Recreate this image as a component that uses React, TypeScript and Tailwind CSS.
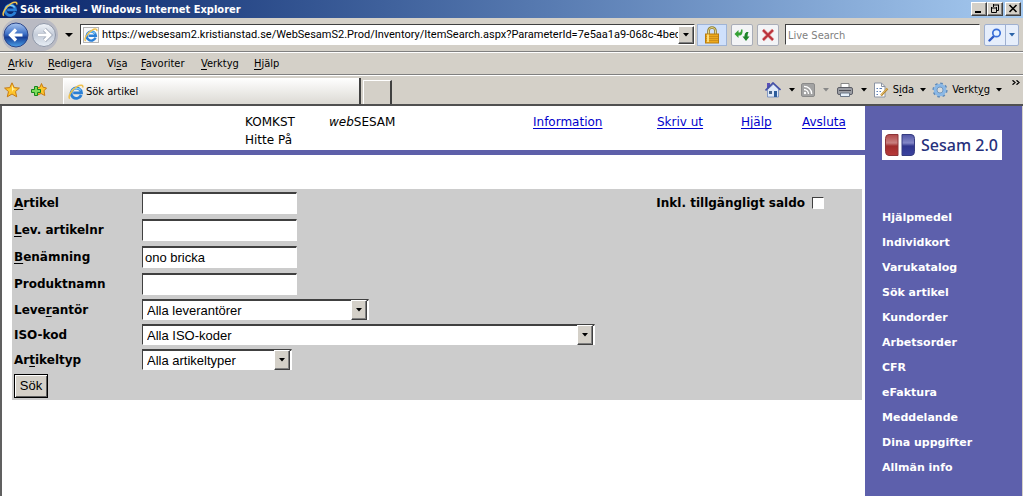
import React, { useId, useState } from "react";

const uiFont = "font-['DejaVu_Sans_Condensed','DejaVu_Sans',sans-serif]";
const addressFont = "font-[Roboto,sans-serif]";
const pageFont = "font-['DejaVu_Sans',sans-serif]";
const fieldFont = "font-['Liberation_Sans',sans-serif]";

const sunken =
  "border border-t-[#404040] border-l-[#404040] border-r-white border-b-white bg-white";
const raised =
  "border border-t-white border-l-white border-r-[#404040] border-b-[#404040] bg-[#d4d0c8] shadow-[inset_-1px_-1px_0_#808080]";

function ExplorerIcon({ className }: { className: string }) {
  return (
    <svg viewBox="0 0 16 16" className={className} aria-hidden="true">
      <path
        d="M13.200 11A5.200 5.200 0 1 1 13.500 8.800H5.200"
        fill="none"
        stroke="#2a7fd6"
        strokeWidth="2.800"
      />
      <path d="M3.600 7.400C4.600 4.200 10.500 3 12.700 6.400" fill="none" stroke="#7fd0fa" strokeWidth="1.200" />
      <path
        d="M1.800 14.800C-0.500 12.500 4 5.500 9 2.600C12.500 0.500 15.500 0.800 14.600 3.600"
        fill="none"
        stroke="#eec04c"
        strokeWidth="1.600"
      />
    </svg>
  );
}

function Caret({ className = "text-black" }: { className?: string }) {
  return (
    <svg viewBox="0 0 6 4" className={`h-1 w-1.5 shrink-0 ${className}`} aria-hidden="true">
      <path d="M0 0H6L3 3.500Z" fill="currentColor" />
    </svg>
  );
}

function NavArrows() {
  return (
    <div className="flex h-8 w-14 shrink-0 items-center rounded-2xl bg-[#b9bac3]">
      <button type="button" aria-label="Bakåt" className="size-7">
        <svg viewBox="0 0 28 28" className="size-7">
          <defs>
            <linearGradient id="back" x1="0" y1="0" x2="0" y2="1">
              <stop offset="0" stopColor="#a9c5ef" />
              <stop offset="0.450" stopColor="#3f72c8" />
              <stop offset="0.600" stopColor="#173e96" />
              <stop offset="1" stopColor="#4ba1ea" />
            </linearGradient>
          </defs>
          <circle cx="14" cy="14" r="12" fill="url(#back)" stroke="#2c468a" />
          <path d="M20.500 14H9M14 8.500L8.500 14L14 19.500" fill="none" stroke="#fff" strokeWidth="3.200" />
        </svg>
      </button>
      <button type="button" aria-label="Framåt" className="size-7">
        <svg viewBox="0 0 28 28" className="size-7">
          <defs>
            <linearGradient id="forward" x1="0" y1="0" x2="0" y2="1">
              <stop offset="0" stopColor="#f2f5fa" />
              <stop offset="0.500" stopColor="#c4ccd9" />
              <stop offset="1" stopColor="#e8eef6" />
            </linearGradient>
          </defs>
          <circle cx="14" cy="14" r="11.500" fill="url(#forward)" stroke="#8f97a8" />
          <path d="M8 14H19M14.500 8.500L20 14L14.500 19.500" fill="none" stroke="#8f98aa" strokeWidth="4" />
          <path d="M8 14H19M14.500 8.500L20 14L14.500 19.500" fill="none" stroke="#fff" strokeWidth="2.800" />
        </svg>
      </button>
    </div>
  );
}

function LockIcon() {
  return (
    <svg viewBox="0 0 16 18" className="h-[18px] w-4" aria-hidden="true">
      <path d="M4.500 9V5a3.500 3.500 0 0 1 7 0V9" fill="none" stroke="#8a7a30" strokeWidth="2.600" />
      <path d="M4.500 9V5a3.500 3.500 0 0 1 7 0V9" fill="none" stroke="#e8d98a" strokeWidth="1" />
      <rect x="1.500" y="8" width="13" height="9" fill="#eda91c" stroke="#b87c10" />
      <path d="M2 10.500H14M2 12.500H14M2 14.500H14" stroke="#cf8f18" />
      <path d="M4 8.500V16" stroke="#fbdc7c" strokeWidth="2" />
    </svg>
  );
}

function RefreshIcon() {
  return (
    <svg viewBox="0 0 16 16" className="size-4" aria-hidden="true">
      <path d="M.5 7L4.500 3V5.500H5.500Q7 5.500 7 2.500H8.500Q9 8.500 5.500 8.500H4.500V11Z" fill="#35a235" />
      <path d="M15.500 9.500L12 14L8.500 9.500H10.500V8.500Q10.500 6 12.500 5H14.500Q13.500 6.500 13.500 9.500Z" fill="#1d8428" />
    </svg>
  );
}

function StopIcon() {
  return (
    <svg viewBox="0 0 14 14" className="size-3.5" aria-hidden="true">
      <path d="M2 2L12 12M12 2L2 12" stroke="#e4a2a2" strokeWidth="3.400" />
      <path d="M2 2L12 12M12 2L2 12" stroke="#b92f38" strokeWidth="1.800" />
    </svg>
  );
}

function SearchIcon() {
  return (
    <svg viewBox="0 0 14 14" className="size-3.5" aria-hidden="true">
      <path d="M1.500 12.500L5.500 8.500" stroke="#2c58c4" strokeWidth="2.400" strokeLinecap="round" />
      <circle cx="8.500" cy="5" r="3.700" fill="#e6f2ff" stroke="#3b6fd8" strokeWidth="1.700" />
    </svg>
  );
}

function StarIcon() {
  return (
    <svg viewBox="0 0 16 16" className="size-4" aria-hidden="true">
      <path
        d="M8 .8L10.200 5.600L15.400 6.100L11.500 9.600L12.700 14.800L8 12L3.300 14.800L4.500 9.600L.6 6.100L5.800 5.600Z"
        fill="#fdc52c"
        stroke="#c77a12"
      />
      <path d="M8 3L9.400 6.600L12 7L9 8L8 10Z" fill="#fff0a8" />
    </svg>
  );
}

function AddStarIcon() {
  return (
    <svg viewBox="0 0 16 16" className="size-4" aria-hidden="true">
      <path
        d="M10.500 1.500L12 5.200L15.500 6L13 8.800L13.800 13.500L10 11.500L6.500 13L7.500 8.500L5 6L9 5.200Z"
        fill="#fdc52c"
        stroke="#c77a12"
      />
      <path
        d="M3.500 4.500H6.500V7.500H9.500V10.500H6.500V13.500H3.500V10.500H.5V7.500H3.500Z"
        fill="#7bdc5a"
        stroke="#16861c"
      />
    </svg>
  );
}

function HomeIcon() {
  return (
    <svg viewBox="0 0 16 16" className="size-4" aria-hidden="true">
      <path d="M2 1H5V5L2 7Z" fill="#5a50b8" />
      <path d="M2.500 7.500L8.500 2L13.500 7V15H2.500Z" fill="#dfe9f8" stroke="#6b86bd" strokeWidth=".8" />
      <path d="M.5 8.500L8 1L15.500 8" fill="none" stroke="#4450a8" strokeWidth="1.700" />
      <rect x="4" y="9" width="3" height="3" fill="#45648f" />
      <rect x="9" y="9" width="3" height="6" fill="#2c5c9c" />
    </svg>
  );
}

function FeedIcon() {
  return (
    <svg viewBox="0 0 14 14" className="size-3.5" aria-hidden="true">
      <rect x=".5" y=".5" width="13" height="13" rx="1.500" fill="#a3a3a3" stroke="#8a8a8a" />
      <circle cx="4" cy="10" r="1.200" fill="#fff" />
      <path d="M3 6.500A4.500 4.500 0 0 1 7.500 11M3 3.300A7.700 7.700 0 0 1 10.700 11" fill="none" stroke="#fff" strokeWidth="1.300" />
    </svg>
  );
}

function PrinterIcon() {
  return (
    <svg viewBox="0 0 16 16" className="size-4" aria-hidden="true">
      <path d="M4 6V1.500H12V6" fill="#fff" stroke="#888" />
      <rect x=".5" y="5.500" width="15" height="7" rx="1.500" fill="#9c9ea4" stroke="#5c5e66" />
      <path d="M2 8.500H14" stroke="#4c4e56" />
      <path d="M3.500 11H12.500V14.500H3.500Z" fill="#e6f1fb" stroke="#6c7888" />
    </svg>
  );
}

function PageIcon() {
  return (
    <svg viewBox="0 0 16 16" className="size-4" aria-hidden="true">
      <path d="M1.500 1H8.500L12 4.500V15H1.500Z" fill="#fff" stroke="#8a93a3" />
      <path d="M8.500 1V4.500H12" fill="none" stroke="#8a93a3" />
      <path d="M3.500 6.500H5M6.500 6.500H9M3.500 9.500H5M6.500 9.500H8M3.500 12.500H5" stroke="#5b7fb8" />
      <path d="M8 13.500L14.500 6.500" stroke="#b8862c" strokeWidth="2.200" />
      <path d="M8 13L14 6.500" stroke="#f3d78a" strokeWidth=".8" />
    </svg>
  );
}

function GearIcon() {
  return (
    <svg viewBox="0 0 16 16" className="size-4" aria-hidden="true">
      <circle cx="8" cy="8" r="6.600" fill="none" stroke="#5f89b8" strokeWidth="2" strokeDasharray="2.600 2.580" />
      <circle cx="8" cy="8" r="4.700" fill="#d4d0c8" stroke="#8ab8e6" strokeWidth="3.200" />
      <circle cx="8" cy="8" r="3" fill="#d8dbdc" stroke="#5f89b8" strokeWidth=".8" />
    </svg>
  );
}

function WindowButton({ label, children }: { label: string; children: React.ReactNode }) {
  return (
    <button type="button" aria-label={label} className={`h-3.5 w-4 ${raised}`}>
      <svg viewBox="0 0 14 12" className="h-3 w-3.5" fill="none" stroke="#000">
        {children}
      </svg>
    </button>
  );
}

function TitleBar() {
  return (
    <header className="flex h-[18px] items-center bg-linear-to-r from-[#0a246a] to-[#a6caf0] pr-0.5 pl-0.5">
      <ExplorerIcon className="size-4" />
      <h1 className={`ml-0.5 flex-1 pt-0.5 text-[11px] leading-4 font-bold text-white ${uiFont}`}>
        Sök artikel - Windows Internet Explorer
      </h1>
      <WindowButton label="Minimera">
        <path d="M3 9H9" strokeWidth="2" />
      </WindowButton>
      <WindowButton label="Återställ">
        <path d="M5 2H11M5.500 1V4M10.500 2V7.500H9M3 5H9M3.500 4V9.500H8.500V4" />
      </WindowButton>
      <span className="w-0.5" />
      <WindowButton label="Stäng">
        <path d="M3.500 2L10.500 9M10.500 2L3.500 9" strokeWidth="1.600" />
      </WindowButton>
    </header>
  );
}

function AddressBar() {
  return (
    <div className="flex h-[34px] items-center border-b border-[#808080] pr-1 pl-0.5">
      <NavArrows />
      <button type="button" aria-label="Senaste sidor" className="flex w-[22px] justify-center">
        <svg viewBox="0 0 8 4" className="h-1 w-2">
          <path d="M0 0H8L4 4Z" />
        </svg>
      </button>
      <div className={`flex h-[21px] min-w-0 flex-1 items-center pl-0.5 ${sunken}`}>
        <span className="flex size-4 shrink-0 items-center justify-center border border-[#b5b5b5] bg-[#f8f8f8]">
          <ExplorerIcon className="size-3.5" />
        </span>
        <input
          aria-label="Adress"
          defaultValue="https://websesam2.kristianstad.se/WebSesamS2.Prod/Inventory/ItemSearch.aspx?ParameterId=7e5aa1a9-068c-4bec"
          className={`ml-[3px] h-[18px] min-w-0 flex-1 text-[11px] outline-none ${addressFont}`}
        />
        <button
          type="button"
          aria-label="Visa adresser"
          className={`flex h-[18px] w-4 shrink-0 items-center justify-center ${raised}`}
        >
          <Caret />
        </button>
      </div>
      <button
        type="button"
        aria-label="Säkerhetsrapport"
        className="ml-0.5 flex h-[22px] w-[30px] items-center justify-center border border-[#9fb4d6] bg-[#cfe0fb]"
      >
        <LockIcon />
      </button>
      <button
        type="button"
        aria-label="Uppdatera"
        className="ml-1 flex size-[22px] items-center justify-center rounded-xs border border-[#a9adb8] bg-[#f3f4f6]"
      >
        <RefreshIcon />
      </button>
      <button
        type="button"
        aria-label="Stoppa"
        className="ml-1 flex size-[22px] items-center justify-center rounded-xs border border-[#a9adb8] bg-[#f3f4f6]"
      >
        <StopIcon />
      </button>
      <input
        aria-label="Live Search"
        placeholder="Live Search"
        className={`ml-1.5 h-[21px] w-[195px] px-0.5 pt-0.5 text-[11px] outline-none placeholder:text-[#808080] ${uiFont} ${sunken}`}
      />
      <div className="ml-1 flex h-[22px] w-[35px] rounded-xs border border-[#9fb0d0] bg-[#e6eefb]">
        <button type="button" aria-label="Sök" className="flex w-5 items-center justify-center">
          <SearchIcon />
        </button>
        <button
          type="button"
          aria-label="Sökalternativ"
          className="flex flex-1 items-center justify-center border-l border-[#9fb0d0]"
        >
          <Caret className="text-[#2b63a8]" />
        </button>
      </div>
    </div>
  );
}

function KeyLabel({ before = "", letter, after }: { before?: string; letter: string; after: string }) {
  return (
    <span>
      {before}
      <span className="underline underline-offset-2">{letter}</span>
      {after}
    </span>
  );
}

function MenuBar() {
  const item = "shrink-0 text-left";
  return (
    <nav
      className={`flex h-[23px] items-center border-t border-b border-t-white border-b-[#808080] pt-0.5 pl-2 text-[11px] ${uiFont}`}
    >
      <button type="button" className={`${item} w-10`}><KeyLabel letter="A" after="rkiv" /></button>
      <button type="button" className={`${item} w-[59px]`}><KeyLabel letter="R" after="edigera" /></button>
      <button type="button" className={`${item} w-[34px]`}><KeyLabel before="Vi" letter="s" after="a" /></button>
      <button type="button" className={`${item} w-[60px]`}><KeyLabel letter="F" after="avoriter" /></button>
      <button type="button" className={`${item} w-[53px]`}><KeyLabel letter="V" after="erktyg" /></button>
      <button type="button" className={item}><KeyLabel letter="H" after="jälp" /></button>
    </nav>
  );
}

function TabBar() {
  return (
    <div
      className={`flex h-[31px] border-t border-b-2 border-t-white border-b-[#505050] pl-1 text-[11px] ${uiFont}`}
    >
      <div className="flex items-center gap-[11px]">
        <button type="button" aria-label="Favoriter"><StarIcon /></button>
        <button type="button" aria-label="Lägg till favorit"><AddStarIcon /></button>
      </div>
      <button
        type="button"
        className="mt-0.5 ml-4 flex w-[298px] items-center gap-0.5 border-r-2 border-l border-r-[#404040] border-l-white bg-linear-to-b from-white to-[#dcdad4] pt-0.5 pl-1"
      >
        <ExplorerIcon className="size-4" />
        Sök artikel
      </button>
      <button
        type="button"
        aria-label="Ny flik"
        className="mt-1 ml-0.5 w-[29px] border border-r-2 border-b-0 border-white border-r-[#404040]"
      />
      <div className="ml-auto flex items-center pr-[3px]">
        <button type="button" aria-label="Startsida" className="flex items-center gap-2"><HomeIcon /><Caret /></button>
        <button type="button" aria-label="Feeds" className="ml-1.5 flex items-center gap-2"><FeedIcon /><Caret className="text-[#888]" /></button>
        <button type="button" aria-label="Skriv ut" className="ml-2 flex items-center gap-2"><PrinterIcon /><Caret /></button>
        <button type="button" className="ml-1.5 flex items-center gap-1">
          <PageIcon />
          <KeyLabel before="S" letter="i" after="da" />
          <span className="ml-0.5 flex"><Caret /></span>
        </button>
        <button type="button" className="ml-1.5 flex items-center gap-1">
          <GearIcon />
          <KeyLabel before="Verkt" letter="y" after="g" />
          <span className="ml-0.5 flex"><Caret /></span>
        </button>
        <button type="button" aria-label="Fler verktyg" className="ml-2.5 self-start pt-1">
          <svg viewBox="0 0 8 5" className="h-[5px] w-2" fill="none" stroke="#000" strokeWidth="1.300">
            <path d="M.5 .3L3 2.500L.5 4.700M4.500 .3L7 2.500L4.500 4.700" />
          </svg>
        </button>
      </div>
    </div>
  );
}

function TextRow({ label, value = "" }: { label: React.ReactNode; value?: string }) {
  const id = useId();
  return (
    <div className="flex h-[27px] items-center">
      <label htmlFor={id} className="w-32 text-xs font-bold">{label}</label>
      <input
        id={id}
        defaultValue={value}
        className={`h-[22px] w-[155px] border-t-2 pl-0.5 text-[13px] outline-none ${fieldFont} ${sunken}`}
      />
    </div>
  );
}

function SelectRow({ label, option, width }: { label: React.ReactNode; option: string; width: string }) {
  const id = useId();
  return (
    <div className="flex h-[25px] items-center">
      <label htmlFor={id} className="w-32 shrink-0 text-xs font-bold">{label}</label>
      <div className={`relative ${width}`}>
        <select
          id={id}
          className={`h-[21px] w-full appearance-none border-t-2 pl-1 text-[13px] outline-none ${fieldFont} ${sunken}`}
        >
          <option>{option}</option>
        </select>
        <span
          className={`pointer-events-none absolute top-0.5 right-0.5 bottom-0.5 flex w-4 items-center justify-center ${raised}`}
        >
          <Caret />
        </span>
      </div>
    </div>
  );
}

function SearchForm() {
  const [withStock, setWithStock] = useState(false);
  return (
    <form
      onSubmit={(event) => event.preventDefault()}
      className="mt-[34px] mr-[3px] ml-0.5 flex items-start bg-[#cccccc] pl-0.5"
    >
      <div className="min-w-0 flex-1">
        <TextRow label={<KeyLabel letter="A" after="rtikel" />} />
        <TextRow label={<KeyLabel letter="L" after="ev. artikelnr" />} />
        <TextRow label={<KeyLabel letter="B" after="enämning" />} value="ono bricka" />
        <TextRow label="Produktnamn" />
        <SelectRow label={<KeyLabel before="Leve" letter="r" after="antör" />} option="Alla leverantörer" width="w-[227px]" />
        <SelectRow label="ISO-kod" option="Alla ISO-koder" width="w-[453px]" />
        <SelectRow label={<KeyLabel before="Ar" letter="t" after="ikeltyp" />} option="Alla artikeltyper" width="w-[150px]" />
        <div className="flex h-7 items-center">
          <button
            type="submit"
            className={`h-6 w-[34px] border border-black bg-[#d4d0c8] text-[13px] shadow-[inset_1px_1px_0_#fff,inset_-1px_-1px_0_#606060] ${fieldFont}`}
          >
            Sök
          </button>
        </div>
      </div>
      <label className="flex h-7 shrink-0 items-center gap-[7px] pr-[38px] text-xs font-bold">
        Inkl. tillgängligt saldo
        <input
          type="checkbox"
          checked={withStock}
          onChange={(event) => setWithStock(event.target.checked)}
          className={`size-3 appearance-none checked:bg-black ${sunken}`}
        />
      </label>
    </form>
  );
}

function PageHeader() {
  const link = "text-[#0000cc] underline underline-offset-2";
  return (
    <div className="flex h-[49px] border-b-[5px] border-[#5d5fa9] pt-[7px] text-xs leading-[18px]">
      <div className="ml-[235px] w-[84px]">
        <div>KOMKST</div>
        <div>Hitte På</div>
      </div>
      <div><em>web</em>SESAM</div>
      <nav className="mr-[17px] ml-auto flex">
        <div className="w-[124px]"><a href="#information" className={link}>Information</a></div>
        <div className="w-[84px]"><a href="#skriv-ut" className={link}>Skriv ut</a></div>
        <div className="w-[61px]"><a href="#hjalp" className={link}>Hjälp</a></div>
        <div className="w-[46px]"><a href="#avsluta" className={link}>Avsluta</a></div>
      </nav>
    </div>
  );
}

const sideLinks = [
  "Hjälpmedel",
  "Individkort",
  "Varukatalog",
  "Sök artikel",
  "Kundorder",
  "Arbetsorder",
  "CFR",
  "eFaktura",
  "Meddelande",
  "Dina uppgifter",
  "Allmän info",
];

function Sidebar() {
  return (
    <aside className="w-[157px] shrink-0 bg-[#5d60ac] pt-6 pl-[17px]">
      <div className="flex h-[30px] w-[120px] items-center gap-1.5 bg-white pl-[3px]">
        <svg viewBox="0 0 30 22" className="h-[22px] w-[30px] shrink-0" aria-hidden="true">
          <defs>
            <linearGradient id="red" x1="0" y1="0" x2="0" y2="1">
              <stop offset="0" stopColor="#b04848" />
              <stop offset="0.400" stopColor="#c98080" />
              <stop offset="0.550" stopColor="#a02c2c" />
              <stop offset="1" stopColor="#b83a3a" />
            </linearGradient>
            <linearGradient id="blue" x1="0" y1="0" x2="0" y2="1">
              <stop offset="0" stopColor="#5054a4" />
              <stop offset="0.400" stopColor="#8488c8" />
              <stop offset="0.550" stopColor="#30368e" />
              <stop offset="1" stopColor="#3c44a0" />
            </linearGradient>
          </defs>
          <path d="M13 .5V21.500H4Q.5 21.500 .5 17.500V4.500Q.5 .5 4 .5Z" fill="url(#red)" stroke="#8c3438" />
          <path d="M17 .5V21.500H26Q29.500 21.500 29.500 17.500V4.500Q29.500 .5 26 .5Z" fill="url(#blue)" stroke="#363c80" />
        </svg>
        <span className="font-['Noto_Sans',sans-serif] text-base font-medium whitespace-nowrap text-[#26307c]">Sesam 2.0</span>
      </div>
      <nav className="mt-[45px] flex flex-col items-start text-[11px] leading-[25px] font-bold text-white">
        {sideLinks.map((name) => (
          <a key={name} href="#sida">{name}</a>
        ))}
      </nav>
    </aside>
  );
}

export default function App() {
  return (
    <div className="flex min-h-screen flex-col bg-[#d4d0c8] text-black">
      <TitleBar />
      <AddressBar />
      <MenuBar />
      <TabBar />
      <div className={`flex flex-1 border-r border-l-2 border-r-[#d4d0c8] border-l-[#606060] bg-white ${pageFont}`}>
        <main className="min-w-0 flex-1 pl-2">
          <PageHeader />
          <SearchForm />
        </main>
        <Sidebar />
      </div>
    </div>
  );
}
